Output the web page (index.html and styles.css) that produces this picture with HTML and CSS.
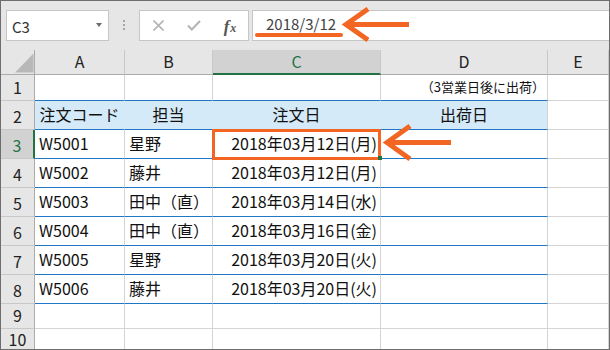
FILE: index.html
```html
<!DOCTYPE html>
<html lang="ja">
<head>
<meta charset="utf-8">
<title>Excel</title>
<link rel="stylesheet" href="styles.css">
</head>
<body>
<div class="frame">
  <div class="fbar">
    <div class="namebox"><span class="ref">C3</span><span class="caret"></span></div>
    <div class="dots"><i></i><i></i><i></i></div>
    <div class="btns">
      <span class="btn"><svg width="11" height="11" viewBox="0 0 11 11"><path d="M0.5 0.5L10.5 10.5M10.5 0.5L0.5 10.5" stroke="#b4b4b4" stroke-width="1.6" fill="none"/></svg></span>
      <span class="btn"><svg width="14" height="11" viewBox="0 0 14 11"><path d="M1 5.5L4.8 9.5L13 1" stroke="#b4b4b4" stroke-width="2" fill="none"/></svg></span>
      <span class="btn fx"><i class="fx-f">f</i><i class="fx-x">x</i></span>
    </div>
    <div class="input"><span class="ftext">2018/3/12</span></div>
  </div>
  <div class="sheet">
    <div class="corner"><svg width="33" height="24" viewBox="0 0 33 24"><polygon points="14,22.5 32.5,22.5 32.5,3.5" fill="#b8b8b8"/></svg></div>
    <div class="ch">A</div>
    <div class="ch">B</div>
    <div class="ch sel">C</div>
    <div class="ch">D</div>
    <div class="ch">E</div>

    <div class="rh">1</div>
    <div class="c b"></div>
    <div class="c b"></div>
    <div class="c b"></div>
    <div class="c b note">（3営業日後に出荷）</div>
    <div class="c"></div>

    <div class="rh">2</div>
    <div class="c b h ctr">注文コード</div>
    <div class="c b h ctr">担当</div>
    <div class="c b h ctr">注文日</div>
    <div class="c b h hl ctr">出荷日</div>
    <div class="c"></div>

    <div class="rh sel">3</div>
    <div class="c b">W5001</div>
    <div class="c b">星野</div>
    <div class="c b r">2018年03月12日(月)</div>
    <div class="c b"></div>
    <div class="c"></div>

    <div class="rh">4</div>
    <div class="c b">W5002</div>
    <div class="c b">藤井</div>
    <div class="c b r">2018年03月12日(月)</div>
    <div class="c b"></div>
    <div class="c"></div>

    <div class="rh">5</div>
    <div class="c b">W5003</div>
    <div class="c b">田中（直）</div>
    <div class="c b r">2018年03月14日(水)</div>
    <div class="c b"></div>
    <div class="c"></div>

    <div class="rh">6</div>
    <div class="c b">W5004</div>
    <div class="c b">田中（直）</div>
    <div class="c b r">2018年03月16日(金)</div>
    <div class="c b"></div>
    <div class="c"></div>

    <div class="rh">7</div>
    <div class="c b">W5005</div>
    <div class="c b">星野</div>
    <div class="c b r">2018年03月20日(火)</div>
    <div class="c b"></div>
    <div class="c"></div>

    <div class="rh">8</div>
    <div class="c b">W5006</div>
    <div class="c b">藤井</div>
    <div class="c b r">2018年03月20日(火)</div>
    <div class="c b"></div>
    <div class="c"></div>

    <div class="rh">9</div>
    <div class="c"></div>
    <div class="c"></div>
    <div class="c"></div>
    <div class="c"></div>
    <div class="c"></div>

    <div class="rh last">10</div>
    <div class="c last"></div>
    <div class="c last"></div>
    <div class="c last"></div>
    <div class="c last"></div>
    <div class="c last"></div>
  </div>
  <svg class="annot" width="610" height="350" viewBox="0 0 610 350">
    <rect x="255" y="33" width="88" height="4" rx="2" fill="#f26522"/>
    <path d="M346 24.5H409M368 9L346 24.5L368 40" stroke="#f26522" stroke-width="5" fill="none" stroke-linejoin="miter"/>
    <rect x="213.5" y="130.5" width="166" height="28" fill="none" stroke="#f26522" stroke-width="3"/>
    <rect x="378" y="156" width="4" height="4" fill="#217346"/>
    <path d="M387 142.5H451M410 126L387 142.5L410 159" stroke="#f26522" stroke-width="5" fill="none" stroke-linejoin="miter"/>
  </svg>
</div>
</body>
</html>
```
FILE: styles.css
```css
* { box-sizing: border-box; margin: 0; padding: 0; }
html, body { width: 610px; height: 350px; overflow: hidden; background: #fff; }
body { font-family: "Noto Sans CJK JP", "Noto Sans", sans-serif; color: #111; }

.frame {
  position: relative;
  width: 610px;
  height: 350px;
  border: 1px solid #6e6e6e;
  background: #e6e6e6;
  overflow: hidden;
}

/* formula bar */
.fbar {
  display: flex;
  align-items: flex-start;
  height: 49px;
  padding: 9px 0 0 5px;
}
.namebox {
  width: 103px;
  height: 31px;
  background: #fff;
  border: 1px solid #c6c6c6;
  display: flex;
  align-items: center;
  padding: 2px 0 0 5px;
  font-size: 15px;
  color: #333;
}
.namebox .ref { flex: 1; line-height: 20px; }
.caret {
  width: 0;
  height: 0;
  border-left: 3.5px solid transparent;
  border-right: 3.5px solid transparent;
  border-top: 4px solid #6d6d6d;
  margin: 0 6px 3px 0;
}
.dots {
  display: flex;
  flex-direction: column;
  gap: 2px;
  margin: 10px 14px 0 14px;
}
.dots i { display: block; width: 2px; height: 2px; background: #a6a6a6; }
.btns {
  width: 110px;
  height: 31px;
  background: #fff;
  border: 1px solid #c6c6c6;
  display: flex;
  margin-right: 3px;
}
.btn {
  width: 36px;
  display: flex;
  align-items: center;
  justify-content: center;
}
.fx {
  font-family: "Liberation Serif", serif;
  font-style: italic;
  color: #555;
  align-items: baseline;
  padding-top: 6px;
}
.fx i { font-style: italic; }
.fx-f { font-size: 17px; font-weight: bold; }
.fx-x { font-size: 12px; font-weight: bold; margin-left: 1px; }
.input {
  flex: 1;
  height: 31px;
  background: #fff;
  border: 1px solid #c6c6c6;
  border-right: none;
  display: flex;
  align-items: center;
  padding: 0 0 3px 13px;
  font-size: 15px;
  color: #444;
}
.ftext { line-height: 20px; }

/* sheet */
.sheet {
  display: grid;
  grid-template-columns: 34px 90px 88px 168px 167px 1fr;
  grid-template-rows: 25px 26px 29px 29px 29px 29px 29px 29px 29px 25px 20px;
  background: #fff;
}
.corner {
  background: #e6e6e6;
  border-right: 1px solid #ababab;
  border-bottom: 1px solid #ababab;
  display: flex;
}
.ch {
  background: #e6e6e6;
  border-right: 1px solid #c8c8c8;
  border-bottom: 1px solid #ababab;
  display: flex;
  align-items: flex-end;
  justify-content: center;
  font-size: 16px;
  line-height: 20px;
  padding-bottom: 3px;
  color: #222;
}
.ch.sel {
  background: #d2d2d2;
  border-bottom: 2px solid #217346;
  padding-bottom: 2px;
  color: #217346;
}
.rh {
  background: #e6e6e6;
  border-right: 1px solid #ababab;
  border-bottom: 1px solid #c8c8c8;
  display: flex;
  align-items: flex-end;
  justify-content: center;
  font-size: 16px;
  line-height: 20px;
  padding-bottom: 3px;
  color: #222;
}
.rh.sel {
  background: #d2d2d2;
  border-right: 2px solid #217346;
  color: #217346;
}
.rh.last { border-bottom: none; padding-bottom: 2px; line-height: 16px; }

.c {
  background: #fff;
  border-right: 1px solid #d4d4d4;
  border-bottom: 1px solid #d4d4d4;
  display: flex;
  align-items: flex-end;
  font-size: 16px;
  line-height: 20px;
  padding: 0 3px 5px 4px;
  white-space: nowrap;
  color: #111;
}
.c.b { border-bottom-color: #2077c5; }
.c.last { border-bottom: none; }
.c.h { background: #d5eaf8; border-right-color: #d5eaf8; }
.c.h.hl { border-right-color: #d4d4d4; }
.c.ctr { justify-content: center; padding-left: 0; padding-right: 0; }
.c.r { justify-content: flex-end; }
.c.note {
  justify-content: flex-end;
  font-size: 13px;
  padding: 0 2px 3px 0;
}

.annot {
  position: absolute;
  left: -1px;
  top: -1px;
  pointer-events: none;
}
```
